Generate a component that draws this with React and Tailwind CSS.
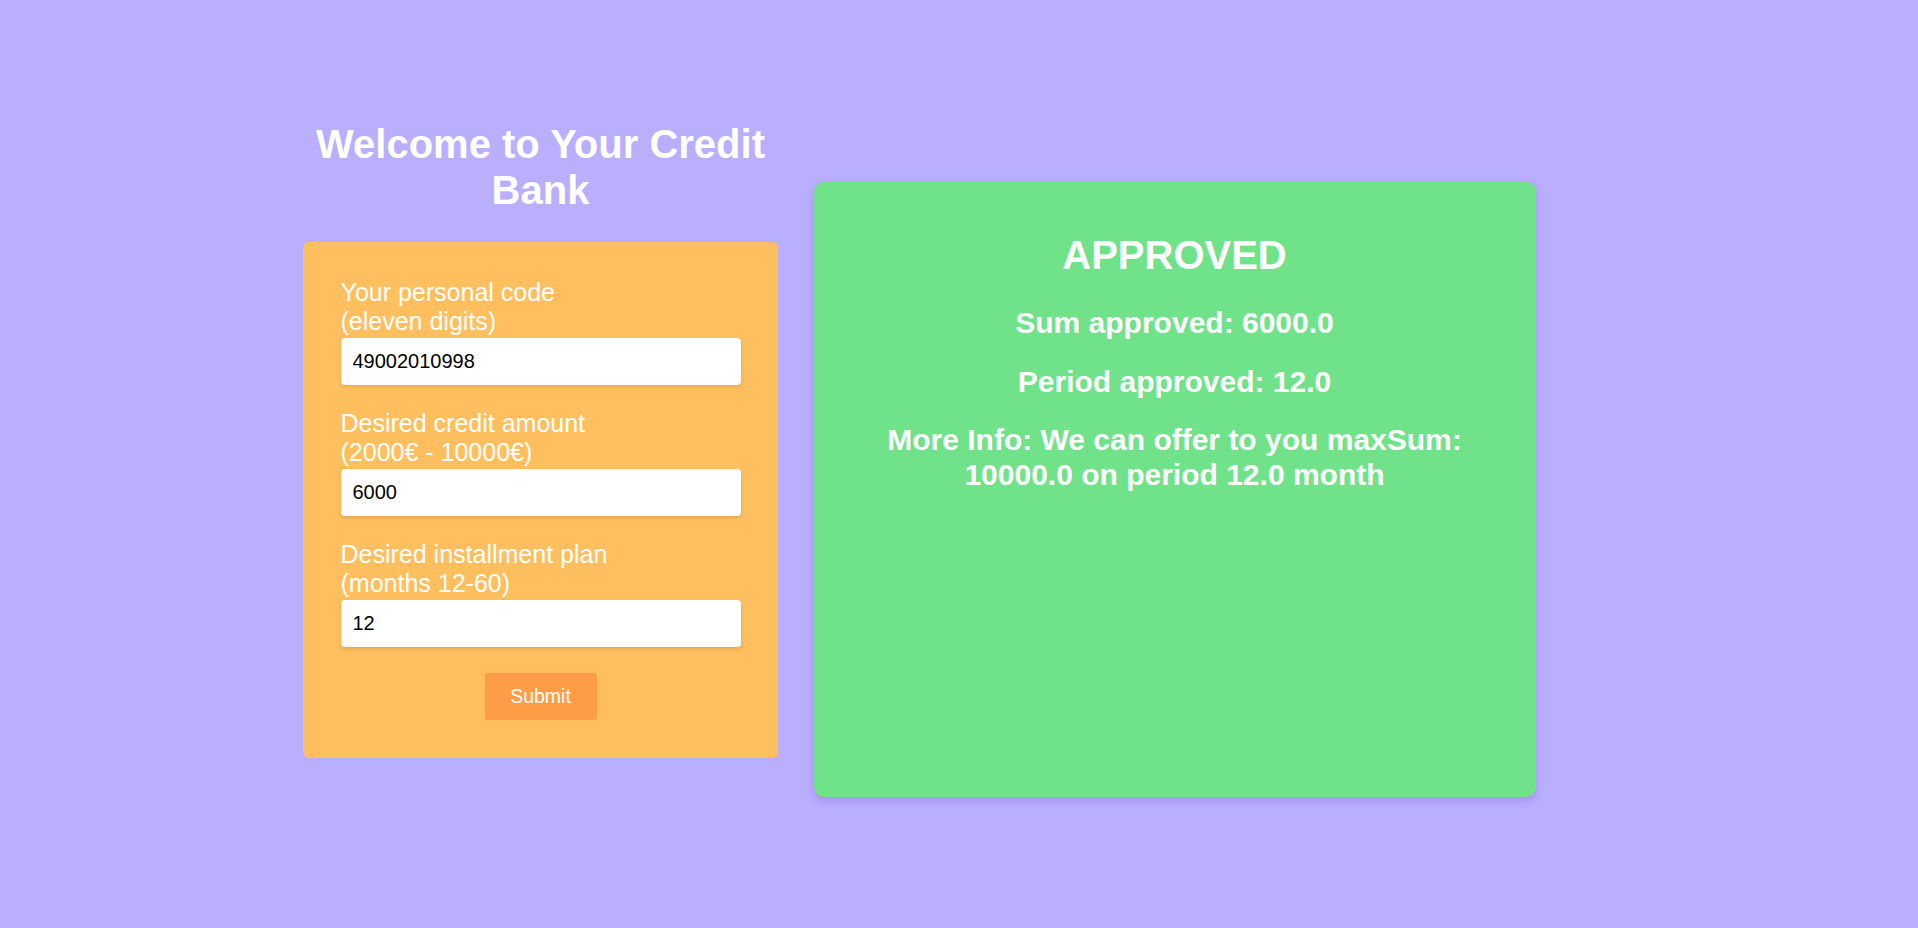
import React from "react";

function Field({ line1, line2, value }) {
  return (
    <div className="flex flex-col">
      <label className="block text-[25px] leading-[29px] text-white mb-[2px]">
        <span className="block">{line1}</span>
        <span className="block">{line2}</span>
      </label>
      <input
        type="text"
        defaultValue={value}
        className="h-[47px] w-full rounded-[4px] bg-white px-3 text-[20px] text-black outline-none shadow-[0_2px_4px_rgba(0,0,0,0.12)]"
        style={{ fontFamily: '"Liberation Sans", Arial, sans-serif' }}
      />
    </div>
  );
}

export default function App() {
  return (
    <div
      className="min-h-[928px] w-full bg-[#baaeff]"
      style={{ fontFamily: '"Liberation Sans", Arial, sans-serif' }}
    >
      <div className="flex items-start pl-[303px]">
        <div className="mt-[121px] flex w-[475px] flex-col">
          <h1 className="text-center text-[40px] font-bold leading-[46px] text-white">
            Welcome to Your Credit Bank
          </h1>
          <form
            className="mt-[29px] flex flex-col gap-[24px] rounded-[6px] bg-[#ffbf5e] px-[37.5px] pt-[36px] pb-[38px]"
            onSubmit={(e) => e.preventDefault()}
          >
            <Field line1="Your personal code" line2="(eleven digits)" value="49002010998" />
            <Field line1="Desired credit amount" line2="(2000€ - 10000€)" value="6000" />
            <Field line1="Desired installment plan" line2="(months 12-60)" value="12" />
            <div className="flex justify-center pt-[2px]">
              <button
                type="submit"
                className="h-[47px] w-[112px] rounded-[3px] bg-[#ff9d47] text-[19.5px] text-white"
              >
                Submit
              </button>
            </div>
          </form>
        </div>
        <div className="ml-[35.5px] mt-[182px] flex h-[615px] w-[722px] flex-col items-center rounded-[10px] bg-[#70e28a] px-[40px] pt-[50px] text-center text-white shadow-[0_4px_8px_rgba(60,40,140,0.18)]">
          <h2 className="text-[40px] font-bold leading-[46px]">APPROVED</h2>
          <p className="mt-[28px] text-[30px] font-bold leading-[34.5px]">Sum approved: 6000.0</p>
          <p className="mt-[24px] text-[30px] font-bold leading-[34.5px]">Period approved: 12.0</p>
          <p className="mt-[24px] text-[30px] font-bold leading-[34.5px]">
            More Info: We can offer to you maxSum: 10000.0 on period 12.0 month
          </p>
        </div>
      </div>
    </div>
  );
}
